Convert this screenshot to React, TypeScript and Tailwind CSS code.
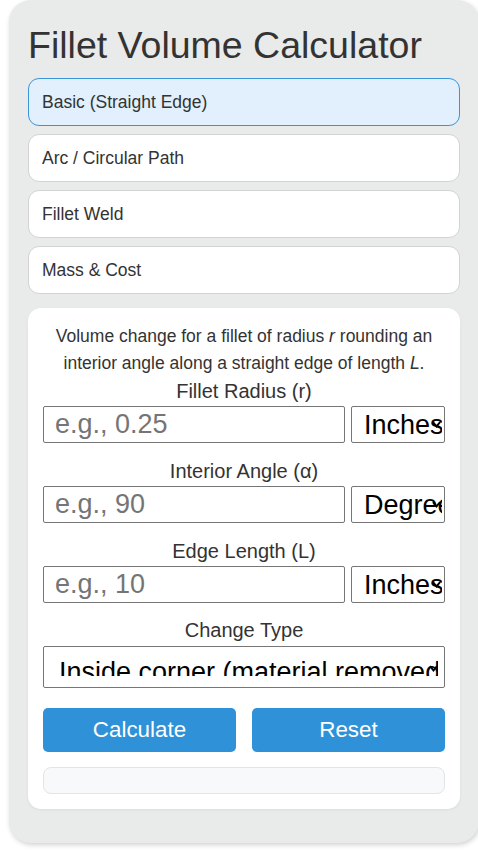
import { useState } from 'react'

const TABS = ['Basic (Straight Edge)', 'Arc / Circular Path', 'Fillet Weld', 'Mass & Cost']

const FONT = "font-['Liberation_Sans',Arial,sans-serif]"

function Chevron({ className }: { className: string }) {
  return (
    <svg viewBox="0 0 9 7" className={className} fill="none">
      <path d="M1 1.2 L4.5 5.4 L8 1.2" stroke="#000" strokeWidth="1.9" />
    </svg>
  )
}

// Fake native select: text runs under the arrow and gets clipped
function UnitSelect({ value }: { value: string }) {
  return (
    <div className="relative h-[37px] w-[94px] shrink-0 border border-[#767676] rounded-[2px] bg-white overflow-hidden">
      <div className="absolute left-[12px] right-[2px] top-[3px] h-[30px] overflow-hidden whitespace-nowrap text-[27px] leading-[30px] text-black">
        {value}
      </div>
      <Chevron className="absolute z-10 right-[3px] top-[14px] w-[9px] h-[7px]" />
    </div>
  )
}

function Field({ label, placeholder, unit }: { label: string; placeholder: string; unit: string }) {
  return (
    <div className="flex flex-col">
      <label className="text-center text-[20px] leading-[30px] text-[#333]">{label}</label>
      <div className="flex gap-[6px]">
        <input
          placeholder={placeholder}
          className="h-[37px] min-w-0 flex-1 border border-[#767676] rounded-[2px] bg-white px-[11px] text-[27px] text-[#333] placeholder:text-[#757575] outline-none"
        />
        <UnitSelect value={unit} />
      </div>
    </div>
  )
}

export default function App() {
  const [tab, setTab] = useState(0)

  return (
    <div className={`${FONT} min-h-[851px] overflow-hidden bg-white pl-[9px]`}>
      <div className="w-[470px] rounded-[22px] bg-[#e9eaea] px-[19px] pt-[24px] pb-[34px] shadow-[1px_2px_5px_rgba(0,0,0,0.18)]">
        <h1 className="text-[37.5px] leading-[43px] text-[#333] mb-[11px]">Fillet Volume Calculator</h1>

        <div className="flex flex-col gap-[8px]">
          {TABS.map((t, i) => (
            <button
              key={t}
              onClick={() => setTab(i)}
              className={`h-[48px] rounded-[11px] border px-[13px] text-left text-[17.5px] text-[#333] ${
                i === tab ? 'border-[#3a94d8] bg-[#e1f0fc]' : 'border-[#d3d3d3] bg-white'
              }`}
            >
              {t}
            </button>
          ))}
        </div>

        <div className="mt-[14px] rounded-[13px] bg-white px-[15px] pt-[15px] pb-[15px] shadow-[0_1px_3px_rgba(0,0,0,0.06)]">
          <p className="text-center text-[17.5px] leading-[26.5px] text-[#333]">
            Volume change for a fillet of radius <i>r</i> rounding an interior angle along a straight edge of length <i>L</i>.
          </p>

          <div className="flex flex-col gap-[13px]">
            <Field label="Fillet Radius (r)" placeholder="e.g., 0.25" unit="Inches" />
            <Field label="Interior Angle (α)" placeholder="e.g., 90" unit="Degrees" />
            <Field label="Edge Length (L)" placeholder="e.g., 10" unit="Inches" />
          </div>

          <div className="mt-[12px] flex flex-col">
            <label className="text-center text-[20px] leading-[30px] text-[#333]">Change Type</label>
            <div className="relative mt-[1px] h-[42px] border border-[#767676] rounded-[2px] bg-white">
              <div className="absolute left-[15px] right-[6px] top-[11px] h-[18px] overflow-hidden whitespace-nowrap text-[27px] leading-[28px] text-black">
                Inside corner (material removed)
              </div>
              <Chevron className="absolute z-10 right-[6px] top-[18px] w-[9px] h-[7px]" />
            </div>
          </div>

          <div className="mt-[20px] flex gap-[16px]">
            <button className="h-[44px] flex-1 rounded-[5px] bg-[#2f91d8] text-[22.4px] text-white">Calculate</button>
            <button className="h-[44px] flex-1 rounded-[5px] bg-[#2f91d8] text-[22.4px] text-white">Reset</button>
          </div>

          <div className="mt-[15px] h-[27px] rounded-[8px] border border-[#e2e4e6] bg-[#f8f9fa]" />
        </div>
      </div>
    </div>
  )
}
